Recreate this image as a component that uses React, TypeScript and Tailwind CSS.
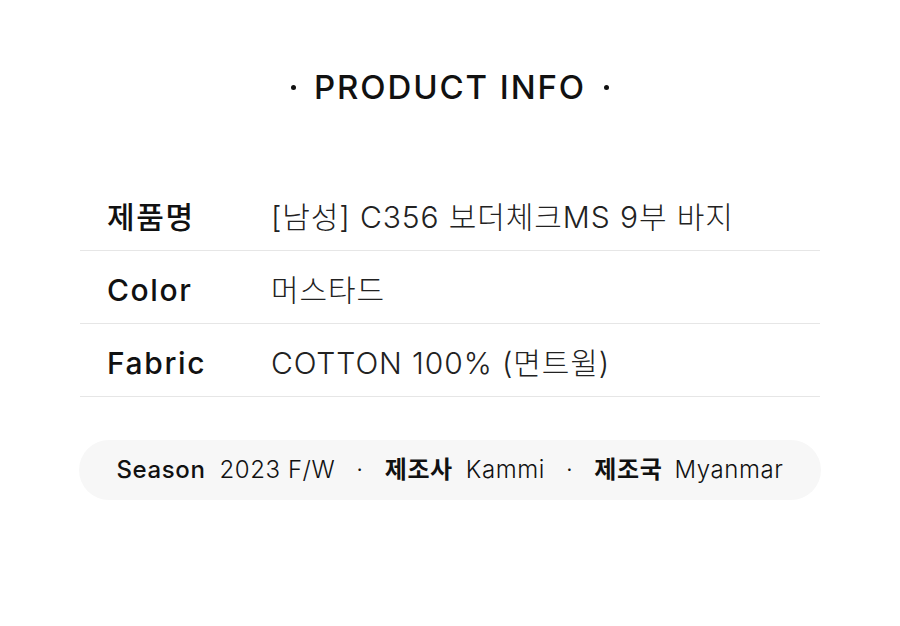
import React from "react";

const FONT = { fontFamily: "Inter, 'Noto Sans CJK KR', sans-serif" };

export default function App() {
  const rows = [
    { label: "제품명", value: "[남성] C356 보더체크MS 9부 바지" },
    { label: "Color", value: "머스타드" },
    { label: "Fabric", value: "COTTON 100% (면트윌)" },
  ];
  return (
    <div className="w-[900px] h-[626px] bg-white text-[#111]" style={FONT}>
      <div className="pt-[66px] flex items-center justify-center">
        <span className="w-[5px] h-[5px] rounded-full bg-[#111]" />
        <h1 className="mx-[18px] text-[33px] font-medium leading-[42px] tracking-[1.9px] text-[#111]">PRODUCT INFO</h1>
        <span className="w-[5px] h-[5px] rounded-full bg-[#111]" />
      </div>
      <div className="mx-[80px] mt-[70px]">
        {rows.map((r) => (
          <div key={r.label} className="flex items-center h-[73px] border-b border-[#e6e6e6] pt-[6px]">
            <div className="w-[191px] pl-[27px] text-[30px] font-medium tracking-[1.6px]">{r.label}</div>
            <div className="text-[30px] font-light tracking-[0.9px] text-[#222]">{r.value}</div>
          </div>
        ))}
      </div>
      <div className="mx-[79px] mt-[43px] h-[60px] rounded-full bg-[#f7f7f7] flex items-center justify-center text-[24px] tracking-[0.6px]">
        <span className="font-medium">Season</span>
        <span className="ml-[14px] font-light">2023 F/W</span>
        <span className="mx-[21px] font-light">·</span>
        <span className="font-bold">제조사</span>
        <span className="ml-[13px] font-light">Kammi</span>
        <span className="mx-[21px] font-light">·</span>
        <span className="font-bold">제조국</span>
        <span className="ml-[12px] font-light">Myanmar</span>
      </div>
    </div>
  );
}
